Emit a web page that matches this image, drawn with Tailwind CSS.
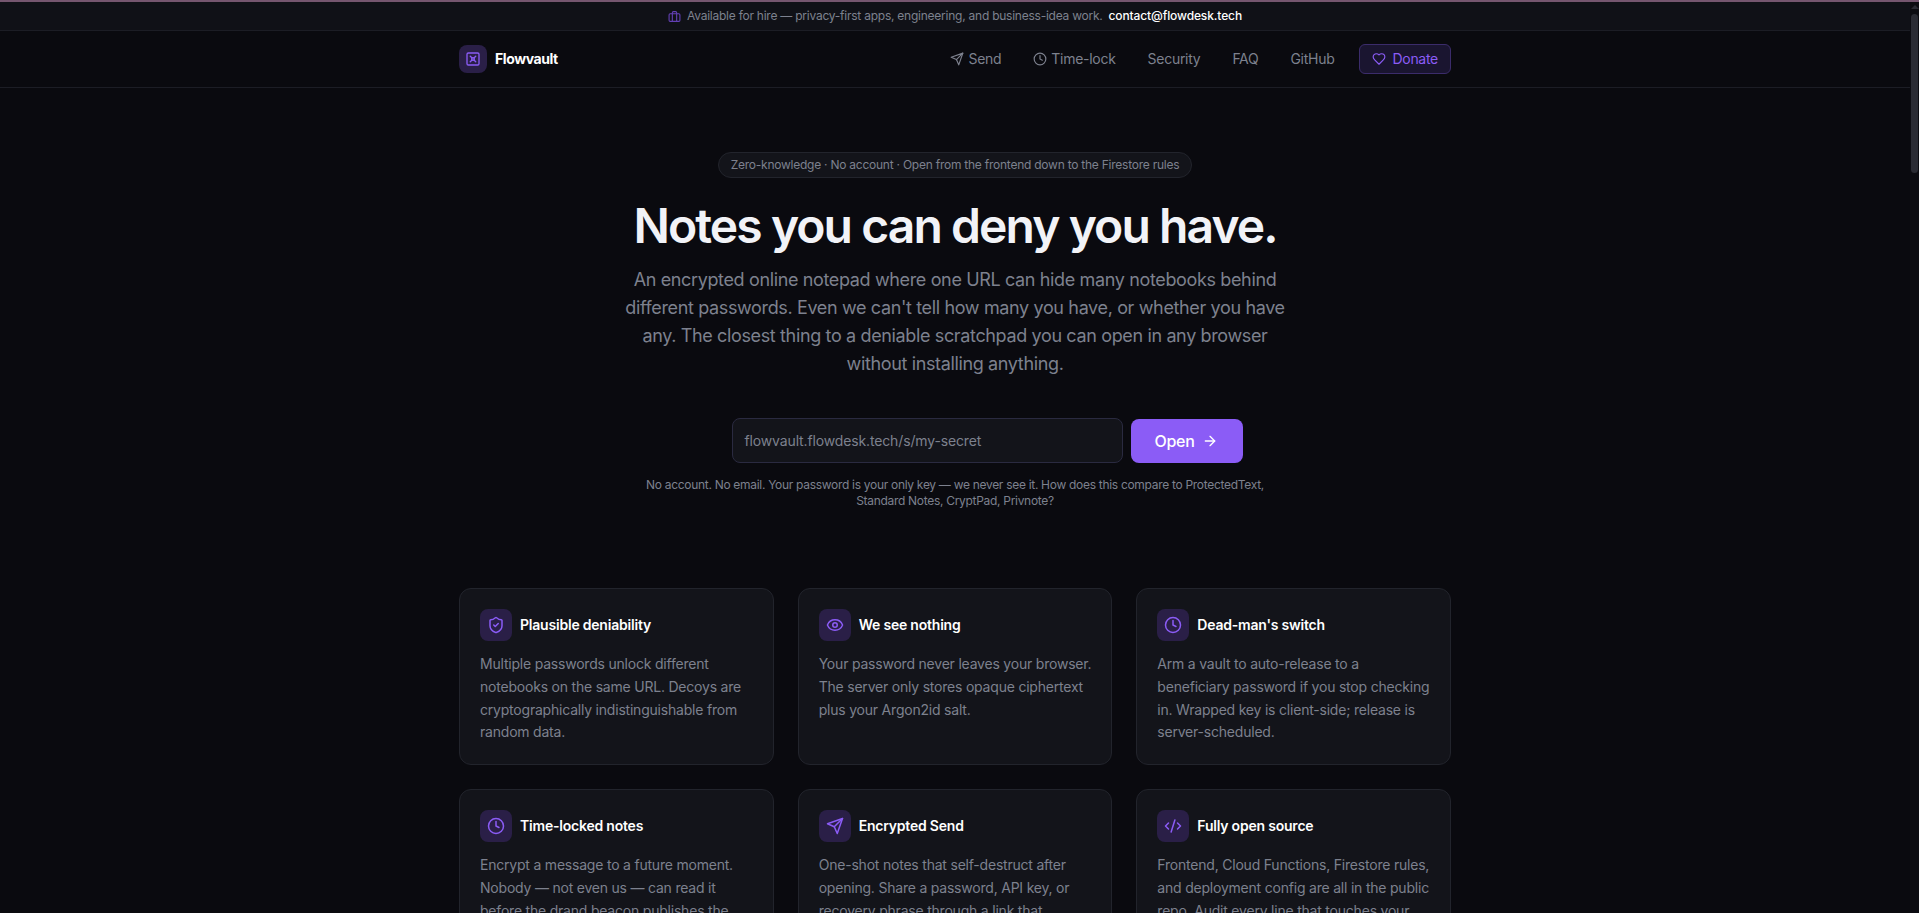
<!DOCTYPE html>
<html lang="en">
<head>
    <meta charset="UTF-8">
    <title>Flowvault</title>
    <script src="https://cdn.jsdelivr.net/npm/@tailwindcss/browser@4"></script>
</head>
<body class="bg-[#0a0a0f] font-[Inter,sans-serif] h-screen overflow-hidden flex flex-col">

    <!-- top accent line -->
    <div class="h-[2px] shrink-0 bg-[#75566f]"></div>

    <div class="flex flex-1 min-h-0">
        <main class="flex-1 min-w-0 overflow-hidden">
            <!-- hire banner -->
            <div class="h-[29px] bg-[#101117] border-b border-[#1c1d25] flex items-center justify-center gap-1.5 text-xs tracking-[-0.02em] text-[#7d818e]">
                <svg class="w-[13px] h-[13px] text-[#6340b5]" viewBox="0 0 24 24" fill="none" stroke="currentColor" stroke-width="2" stroke-linecap="round" stroke-linejoin="round"><rect x="2" y="7" width="20" height="14" rx="2"/><path d="M16 21V5a2 2 0 0 0-2-2h-4a2 2 0 0 0-2 2v16"/></svg>
                <span>Available for hire — privacy-first apps, engineering, and business-idea work.</span>
                <a class="font-medium tracking-[-0.01em] text-white">contact@flowdesk.tech</a>
            </div>

            <!-- nav -->
            <header class="h-[57px] border-b border-[#1c1d25]">
                <div class="w-[992px] h-14 mx-auto flex items-center justify-between">
                    <div class="flex items-center gap-2">
                        <div class="w-7 h-7 rounded-lg bg-[#2a1f47] flex items-center justify-center text-[#8b5cf6]">
                            <svg class="w-4 h-4" viewBox="0 0 24 24" fill="none" stroke="currentColor" stroke-width="2" stroke-linecap="round" stroke-linejoin="round"><rect x="3" y="3" width="18" height="18" rx="2"/><path d="m7.9 7.9 2.7 2.7"/><path d="m13.4 10.6 2.7-2.7"/><path d="m7.9 16.1 2.7-2.7"/><path d="m13.4 13.4 2.7 2.7"/><circle cx="12" cy="12" r="2"/></svg>
                        </div>
                        <span class="text-sm font-bold tracking-[-0.03em] text-white">Flowvault</span>
                    </div>
                    <nav class="flex items-center gap-8 text-sm tracking-[-0.02em] text-[#7d818e]">
                        <a class="flex items-center gap-1"><svg class="w-3.5 h-3.5" viewBox="0 0 24 24" fill="none" stroke="currentColor" stroke-width="2" stroke-linecap="round" stroke-linejoin="round"><path d="m22 2-7 20-4-9-9-4Z"/><path d="M22 2 11 13"/></svg>Send</a>
                        <a class="flex items-center gap-1"><svg class="w-3.5 h-3.5" viewBox="0 0 24 24" fill="none" stroke="currentColor" stroke-width="2" stroke-linecap="round" stroke-linejoin="round"><circle cx="12" cy="12" r="10"/><path d="M12 6v6l4 2"/></svg>Time-lock</a>
                        <a>Security</a>
                        <a>FAQ</a>
                        <a>GitHub</a>
                        <a class="-ml-[7px] h-[30px] px-3 flex items-center gap-1.5 rounded-md border border-[#3b2c6b] bg-[#1a1530] text-[#8b5cf6]"><svg class="w-3.5 h-3.5" viewBox="0 0 24 24" fill="none" stroke="currentColor" stroke-width="2" stroke-linecap="round" stroke-linejoin="round"><path d="M19 14c1.49-1.46 3-3.21 3-5.5A5.5 5.5 0 0 0 16.5 3c-1.76 0-3 .5-4.5 2-1.5-1.5-2.74-2-4.5-2A5.5 5.5 0 0 0 2 8.5c0 2.3 1.5 4.05 3 5.5l7 7Z"/></svg>Donate</a>
                    </nav>
                </div>
            </header>

            <!-- hero -->
            <section class="pt-16 flex flex-col items-center text-center">
                <span class="h-[26px] px-3 flex items-center rounded-full border border-[#22242c] bg-[#13141a] text-xs tracking-[-0.02em] text-[#7d818e]">Zero-knowledge · No account · Open from the frontend down to the Firestore rules</span>
                <h1 class="mt-6 text-5xl leading-none font-semibold tracking-[-0.04em] text-[#f2f3f7]">Notes you can deny you have.</h1>
                <p class="mt-4 max-w-2xl text-lg leading-7 tracking-[-0.02em] text-[#7d818e]">An encrypted online notepad where one URL can hide many notebooks behind different passwords. Even we can't tell how many you have, or whether you have any. The closest thing to a deniable scratchpad you can open in any browser without installing anything.</p>

                <div class="mt-10 w-[575px] flex items-center justify-end gap-2">
                    <div class="w-[391px] h-[45px] px-3 flex items-center rounded-lg border border-[#2a2a40] bg-[#13141a] text-sm tracking-[-0.01em] text-[#7d818e]">flowvault.flowdesk.tech/s/my-secret</div>
                    <button class="w-28 h-11 flex items-center justify-center gap-2 rounded-lg bg-[#8b5cf6] text-base font-medium tracking-[-0.02em] text-white">Open
                        <svg class="w-4 h-4" viewBox="0 0 24 24" fill="none" stroke="currentColor" stroke-width="2" stroke-linecap="round" stroke-linejoin="round"><path d="M5 12h14"/><path d="m12 5 7 7-7 7"/></svg>
                    </button>
                </div>
                <p class="mt-[14px] max-w-[640px] text-xs leading-4 tracking-[-0.025em] text-[#7d818e]">No account. No email. Your password is your only key — we never see it. How does this compare to ProtectedText, Standard Notes, CryptPad, Privnote?</p>
            </section>

            <!-- features -->
            <section class="mt-[79px] w-[992px] mx-auto grid grid-cols-3 gap-6">
                <div class="p-5 rounded-xl border border-[#22242c] bg-[#13141a]">
                    <div class="flex items-center gap-2">
                        <div class="w-8 h-8 rounded-lg bg-[#2a1f47] flex items-center justify-center text-[#8b5cf6]">
                            <svg class="w-[18px] h-[18px]" viewBox="0 0 24 24" fill="none" stroke="currentColor" stroke-width="2" stroke-linecap="round" stroke-linejoin="round"><path d="M20 13c0 5-3.5 7.5-7.66 8.95a1 1 0 0 1-.67-.01C7.5 20.5 4 18 4 13V6a1 1 0 0 1 1-1c2 0 4.5-1.2 6.24-2.72a1.17 1.17 0 0 1 1.52 0C14.51 3.81 17 5 19 5a1 1 0 0 1 1 1z"/><path d="m9 12 2 2 4-4"/></svg>
                        </div>
                        <h3 class="text-sm font-semibold tracking-[-0.015em] text-white">Plausible deniability</h3>
                    </div>
                    <p class="mt-3 text-sm leading-[22.75px] tracking-[-0.015em] text-[#7d818e]">Multiple passwords unlock different notebooks on the same URL. Decoys are cryptographically indistinguishable from random data.</p>
                </div>
                <div class="p-5 rounded-xl border border-[#22242c] bg-[#13141a]">
                    <div class="flex items-center gap-2">
                        <div class="w-8 h-8 rounded-lg bg-[#2a1f47] flex items-center justify-center text-[#8b5cf6]">
                            <svg class="w-[18px] h-[18px]" viewBox="0 0 24 24" fill="none" stroke="currentColor" stroke-width="2" stroke-linecap="round" stroke-linejoin="round"><path d="M2.062 12.348a1 1 0 0 1 0-.696 10.75 10.75 0 0 1 19.876 0 1 1 0 0 1 0 .696 10.75 10.75 0 0 1-19.876 0"/><circle cx="12" cy="12" r="3"/></svg>
                        </div>
                        <h3 class="text-sm font-semibold tracking-[-0.015em] text-white">We see nothing</h3>
                    </div>
                    <p class="mt-3 text-sm leading-[22.75px] tracking-[-0.015em] text-[#7d818e]">Your password never leaves your browser. The server only stores opaque ciphertext plus your Argon2id salt.</p>
                </div>
                <div class="p-5 rounded-xl border border-[#22242c] bg-[#13141a]">
                    <div class="flex items-center gap-2">
                        <div class="w-8 h-8 rounded-lg bg-[#2a1f47] flex items-center justify-center text-[#8b5cf6]">
                            <svg class="w-[18px] h-[18px]" viewBox="0 0 24 24" fill="none" stroke="currentColor" stroke-width="2" stroke-linecap="round" stroke-linejoin="round"><circle cx="12" cy="12" r="10"/><path d="M12 6v6l4 2"/></svg>
                        </div>
                        <h3 class="text-sm font-semibold tracking-[-0.015em] text-white">Dead-man's switch</h3>
                    </div>
                    <p class="mt-3 text-sm leading-[22.75px] tracking-[-0.015em] text-[#7d818e]">Arm a vault to auto-release to a beneficiary password if you stop checking in. Wrapped key is client-side; release is server-scheduled.</p>
                </div>
                <div class="p-5 rounded-xl border border-[#22242c] bg-[#13141a]">
                    <div class="flex items-center gap-2">
                        <div class="w-8 h-8 rounded-lg bg-[#2a1f47] flex items-center justify-center text-[#8b5cf6]">
                            <svg class="w-[18px] h-[18px]" viewBox="0 0 24 24" fill="none" stroke="currentColor" stroke-width="2" stroke-linecap="round" stroke-linejoin="round"><circle cx="12" cy="12" r="10"/><path d="M12 6v6l4 2"/></svg>
                        </div>
                        <h3 class="text-sm font-semibold tracking-[-0.015em] text-white">Time-locked notes</h3>
                    </div>
                    <p class="mt-3 text-sm leading-[22.75px] tracking-[-0.015em] text-[#7d818e]">Encrypt a message to a future moment. Nobody — not even us — can read it before the drand beacon publishes the key.</p>
                </div>
                <div class="p-5 rounded-xl border border-[#22242c] bg-[#13141a]">
                    <div class="flex items-center gap-2">
                        <div class="w-8 h-8 rounded-lg bg-[#2a1f47] flex items-center justify-center text-[#8b5cf6]">
                            <svg class="w-[18px] h-[18px]" viewBox="0 0 24 24" fill="none" stroke="currentColor" stroke-width="2" stroke-linecap="round" stroke-linejoin="round"><path d="m22 2-7 20-4-9-9-4Z"/><path d="M22 2 11 13"/></svg>
                        </div>
                        <h3 class="text-sm font-semibold tracking-[-0.015em] text-white">Encrypted Send</h3>
                    </div>
                    <p class="mt-3 text-sm leading-[22.75px] tracking-[-0.015em] text-[#7d818e]">One-shot notes that self-destruct after opening. Share a password, API key, or recovery phrase through a link that disappears on first read.</p>
                </div>
                <div class="p-5 rounded-xl border border-[#22242c] bg-[#13141a]">
                    <div class="flex items-center gap-2">
                        <div class="w-8 h-8 rounded-lg bg-[#2a1f47] flex items-center justify-center text-[#8b5cf6]">
                            <svg class="w-[18px] h-[18px]" viewBox="0 0 24 24" fill="none" stroke="currentColor" stroke-width="2" stroke-linecap="round" stroke-linejoin="round"><path d="m18 16 4-4-4-4"/><path d="m6 8-4 4 4 4"/><path d="m14.5 4-5 16"/></svg>
                        </div>
                        <h3 class="text-sm font-semibold tracking-[-0.015em] text-white">Fully open source</h3>
                    </div>
                    <p class="mt-3 text-sm leading-[22.75px] tracking-[-0.015em] text-[#7d818e]">Frontend, Cloud Functions, Firestore rules, and deployment config are all in the public repo. Audit every line that touches your data.</p>
                </div>
            </section>
        </main>

        <!-- scrollbar -->
        <aside class="w-[9px] shrink-0 bg-[#0c0c11] flex flex-col items-center pt-[3px] gap-[5px]">
            <div class="w-0 h-0 border-x-[4px] border-x-transparent border-b-[4px] border-b-[#2a2b33]"></div>
            <div class="w-[7px] h-[159px] rounded-full bg-[#2a2b33]"></div>
        </aside>
    </div>
</body>
</html>
